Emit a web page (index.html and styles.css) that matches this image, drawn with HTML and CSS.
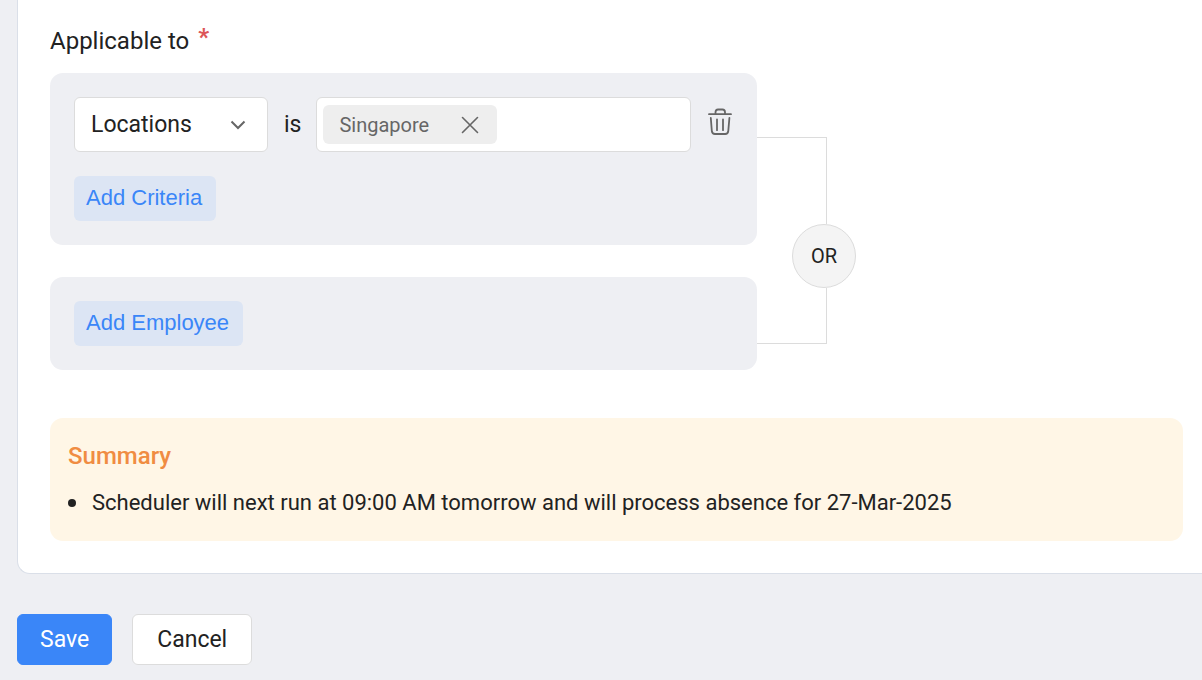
FILE: index.html
```html
<!DOCTYPE html>
<html lang="en">
<head>
<meta charset="utf-8">
<title>Scheduler</title>
<meta name="viewport" content="width=device-width, initial-scale=1">
<link rel="stylesheet" href="styles.css">
</head>
<body>
<form class="page">
	<div class="card">
		<h2 class="label">Applicable to <span class="required">*</span></h2>

		<div class="rules">
			<div class="groups">
				<div class="group">
					<div class="criteria">
						<div class="select">
							<select aria-label="Field">
								<option>Locations</option>
							</select>
							<svg class="arrow" width="16" height="10" viewBox="0 0 16 10" fill="none"><path d="M1.5 1.5 8 8l6.5-6.5" stroke="#666" stroke-width="2"/></svg>
						</div>
						<span class="is">is</span>
						<div class="tags">
							<span class="tag">Singapore
								<button type="button" class="icon" aria-label="Remove Singapore">
									<svg width="18" height="18" viewBox="0 0 18 18" fill="none"><path d="M1.5 1.5l15 15M16.5 1.5l-15 15" stroke="#666" stroke-width="1.6" stroke-linecap="round"/></svg>
								</button>
							</span>
							<input type="text" aria-label="Location value">
						</div>
						<button type="button" class="icon trash" aria-label="Delete criteria">
							<svg width="24" height="28" viewBox="0 0 24 28" fill="none" stroke="#666" stroke-width="1.8" stroke-linecap="round" stroke-linejoin="round"><path d="M1 6.2h22M7.500 5.800V4.200Q7.500 1.500 10 1.500h4.500Q17 1.500 17 4.200v1.600M2.800 10l1 12.800Q4.200 26 7 26h10.200Q20 26 20.300 22.800L21.400 10M9 11.500v10.700M15 11.500v10.700"/></svg>
						</button>
					</div>
					<button type="button" class="add">Add Criteria</button>
				</div>
				<div class="group">
					<button type="button" class="add">Add Employee</button>
				</div>
			</div>
			<div class="join">
				<div class="line line-top"></div>
				<span class="or">OR</span>
				<div class="line line-bottom"></div>
			</div>
		</div>

		<div class="summary">
			<h3>Summary</h3>
			<ul>
				<li>Scheduler will next run at 09:00 AM tomorrow and will process absence for 27-Mar-2025</li>
			</ul>
		</div>
	</div>

	<div class="actions">
		<button type="submit" class="btn save">Save</button>
		<button type="button" class="btn cancel">Cancel</button>
	</div>
</form>
</body>
</html>
```
FILE: styles.css
```css
*{ box-sizing:border-box;}
body,h2,h3,ul{ margin:0; padding:0;}
body{ background:#eeeff3; color:#222; font-family:Roboto, "Liberation Sans", sans-serif; font-size:23px; line-height:28px;}
button,select,input{ font:inherit; color:inherit; margin:0;}
button{ cursor:pointer;}
svg{ display:block;}

.page{ padding-left:17px;}
.card{ background:#fff; border:1px solid #dadfe8; border-width:0 0 1px 1px; border-radius:0 0 0 13px; padding:25px 19px 32px 32px;}
.label{ font-size:24px; font-weight:400; margin-bottom:18px;}
.required{ color:#dc5658; font-weight:700; line-height:1; vertical-align:4px; margin-left:3px;}

.rules{ display:flex; margin-bottom:48px;}
.groups{ width:62.4%; display:flex; flex-direction:column; gap:32px;}
.group{ background:#eeeff3; border-radius:13px; padding:24px;}
.criteria{ display:flex; align-items:center; margin-bottom:24px;}

.select{ position:relative; width:194px;}
.select select{ width:100%; height:55px; padding:0 16px; background:#fff; border:1px solid #dcdcdc; border-radius:6px; appearance:none;}
.arrow{ position:absolute; right:22px; top:23px; pointer-events:none;}
.is{ margin:0 15px 0 16px;}
.tags{ flex:1; min-width:0; height:55px; display:flex; align-items:center; padding:0 6px; background:#fff; border:1px solid #dcdcdc; border-radius:6px;}
.tags input{ flex:1; min-width:0; border:0; outline:0; background:none;}
.tag{ display:flex; align-items:center; gap:32px; height:39px; padding:0 18px 0 16px; background:#eee; border-radius:6px; color:#666; font-size:20px;}
.icon{ padding:0; border:0; background:none;}
.trash{ margin:0 1px 0 17px; padding-bottom:6px;}

.add{ display:block; height:45px; padding:0 14px 2px 12px; border:0; border-radius:6px; background:#dce5f4; color:#3a86f8; font-family:"Liberation Sans", Arial, sans-serif; font-size:22px;}

/* connector between the two groups */
.join{ display:flex; flex-direction:column; padding:64px 0 26px;}
.line{ width:70px; border:0 solid #dcdcdc; border-right-width:1px;}
.line-top{ flex:1; border-top-width:1px;}
.line-bottom{ height:56px; border-bottom-width:1px;}
.or{ width:64px; height:64px; margin-left:35px; border:1px solid #dcdcdc; border-radius:50%; background:#f4f4f4; font-size:20px; line-height:62px; text-align:center;}

.summary{ background:#fff6e6; border-radius:13px; padding:24px 18px;}
.summary h3{ margin-bottom:19px; color:#f08c42; font-size:24px; font-weight:500;}
.summary ul{ list-style:none; font-size:22px;}
.summary li{ display:flex; align-items:center; gap:16px;}
.summary li:before{ content:""; flex:none; width:8px; height:8px; border-radius:50%; background:#222;}

.actions{ display:flex; gap:20px; padding:40px 0 15px;}
.btn{ height:51px; padding:0 22px; border:1px solid #dcdcdc; border-radius:6px; background:#fff;}
.save{ background:#3a86f8; border-color:#3a86f8; color:#fff;}
.cancel{ padding:0 24px;}
```
